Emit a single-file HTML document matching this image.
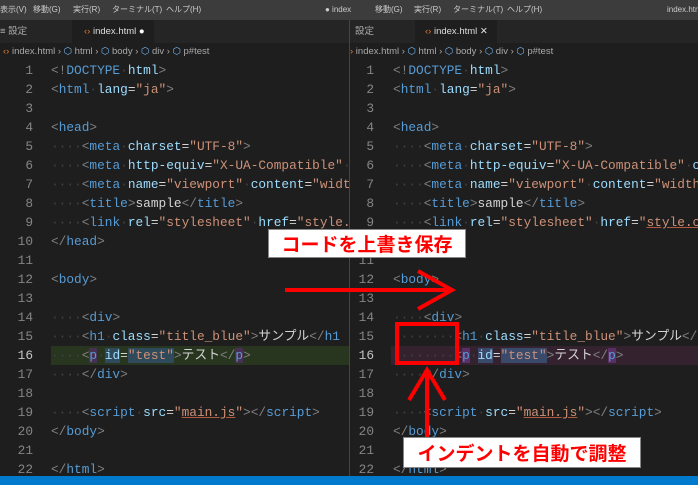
<!DOCTYPE html>
<html><head><meta charset="utf-8"><style>
*{margin:0;padding:0;box-sizing:border-box}
body{width:698px;height:485px;background:#1e1e1e;overflow:hidden;position:relative;font-family:"Liberation Sans","Noto Sans CJK JP",sans-serif}
.menu{position:absolute;left:0;top:0;width:698px;height:20px;background:#3c3c3c;color:#ccc;font-size:8px;line-height:20px;white-space:nowrap}
.menu span{position:absolute}
.tabs{position:absolute;top:20px;height:23px;background:#252526;font-size:9.5px;color:#aaa;line-height:23px}
.tab{position:absolute;top:0;height:23px;background:#1e1e1e;color:#ddd;padding-left:12px}
.crumb{position:absolute;top:43px;height:17px;font-size:9.5px;color:#a9a9a9;line-height:17px;white-space:nowrap}
.pane{position:absolute;top:61px;overflow:hidden;height:415px}
.ln{position:absolute;top:0;text-align:right;font-family:"Liberation Mono",monospace;font-size:12.8px;line-height:19px;color:#858585}
.code{position:absolute;top:0;font-family:"Liberation Mono","Noto Sans CJK JP",monospace;font-size:12.8px;line-height:19px;color:#d4d4d4;white-space:normal}
.code div{height:19px;white-space:pre}
.b{color:#808080}.t{color:#569cd6}.a{color:#9cdcfe}.s{color:#ce9178}.d{color:#424242}.u{text-decoration:underline;text-decoration-color:#b05a40}
.status{position:absolute;left:0;top:476px;width:698px;height:9px;background:#007acc}
.label{position:absolute;background:#fff;border:1px solid #888;color:#f00;font-weight:bold;font-size:19px;text-align:center;font-family:"Noto Sans CJK JP",sans-serif}
</style></head><body>
<div class="menu"><span style="left:0">表示(V)</span><span style="left:33px">移動(G)</span><span style="left:73px">実行(R)</span><span style="left:112px">ターミナル(T)</span><span style="left:166px">ヘルプ(H)</span>
<span style="left:325px">● index</span><span style="left:375px">移動(G)</span><span style="left:414px">実行(R)</span><span style="left:453px">ターミナル(T)</span><span style="left:507px">ヘルプ(H)</span><span style="left:667px">index.htm</span></div>
<div class="tabs" style="left:0;width:349px"><span style="position:absolute;left:0">≡ 設定</span><div class="tab" style="left:72px;width:82px"><span style="color:#e37933">‹›</span> index.html <span style="color:#fff">●</span></div></div>
<div class="tabs" style="left:350px;width:348px"><span style="position:absolute;left:5px">設定</span><div class="tab" style="left:65px;width:82px;padding-left:10px"><span style="color:#e37933">‹›</span> index.html ✕</div></div>
<div class="crumb" style="left:3px"><span style="color:#e37933">‹›</span> index.html › <span style="color:#75beff">⬡</span> html › <span style="color:#75beff">⬡</span> body › <span style="color:#75beff">⬡</span> div › <span style="color:#75beff">⬡</span> p#test</div>
<div class="crumb" style="left:350px"><span style="color:#e37933">›</span> index.html › <span style="color:#75beff">⬡</span> html › <span style="color:#75beff">⬡</span> body › <span style="color:#75beff">⬡</span> div › <span style="color:#75beff">⬡</span> p#test</div>

<div class="pane" style="left:0;width:349px">
<div style="position:absolute;left:51px;top:285px;width:298px;height:19px;background:#28351f"></div>
<div class="ln" style="left:0;width:33px">1<br>2<br>3<br>4<br>5<br>6<br>7<br>8<br>9<br>10<br>11<br>12<br>13<br>14<br>15<br><span style="color:#c6c6c6">16</span><br>17<br>18<br>19<br>20<br>21<br>22</div>
<div class="code" style="left:51px">
<div><span class="b">&lt;!</span><span class="t">DOCTYPE</span><span class="d">·</span><span class="a">html</span><span class="b">&gt;</span></div>
<div><span class="b">&lt;</span><span class="t">html</span><span class="d">·</span><span class="a">lang</span>=<span class="s">"ja"</span><span class="b">&gt;</span></div>
<div></div>
<div><span class="b">&lt;</span><span class="t">head</span><span class="b">&gt;</span></div>
<div><span class="d">····</span><span class="b">&lt;</span><span class="t">meta</span><span class="d">·</span><span class="a">charset</span>=<span class="s">"UTF-8"</span><span class="b">&gt;</span></div>
<div><span class="d">····</span><span class="b">&lt;</span><span class="t">meta</span><span class="d">·</span><span class="a">http-equiv</span>=<span class="s">"X-UA-Compatible"</span><span class="d">·</span><span class="a">content</span></div>
<div><span class="d">····</span><span class="b">&lt;</span><span class="t">meta</span><span class="d">·</span><span class="a">name</span>=<span class="s">"viewport"</span><span class="d">·</span><span class="a">content</span>=<span class="s">"width</span></div>
<div><span class="d">····</span><span class="b">&lt;</span><span class="t">title</span><span class="b">&gt;</span>sample<span class="b">&lt;/</span><span class="t">title</span><span class="b">&gt;</span></div>
<div><span class="d">····</span><span class="b">&lt;</span><span class="t">link</span><span class="d">·</span><span class="a">rel</span>=<span class="s">"stylesheet"</span><span class="d">·</span><span class="a">href</span>=<span class="s">"style.css"</span></div>
<div><span class="b">&lt;/</span><span class="t">head</span><span class="b">&gt;</span></div>
<div></div>
<div><span class="b">&lt;</span><span class="t">body</span><span class="b">&gt;</span></div>
<div></div>
<div><span class="d">····</span><span class="b">&lt;</span><span class="t">div</span><span class="b">&gt;</span></div>
<div><span class="d">····</span><span class="b">&lt;</span><span class="t">h1</span><span class="d">·</span><span class="a">class</span>=<span class="s">"title_blue"</span><span class="b">&gt;</span>サンプル<span class="b">&lt;/</span><span class="t">h1</span></div>
<div><span class="d">····</span><span class="b">&lt;</span><span class="t" style="background:#4a2f55">p</span><span class="d">·</span><span class="a" style="background:#2f4a5a">id</span>=<span class="s" style="background:#2f4a5a">"test"</span><span class="b">&gt;</span>テスト<span class="b">&lt;/</span><span class="t" style="background:#4a2f55">p</span><span class="b">&gt;</span></div>
<div><span class="d">····</span><span class="b">&lt;/</span><span class="t">div</span><span class="b">&gt;</span></div>
<div></div>
<div><span class="d">····</span><span class="b">&lt;</span><span class="t">script</span><span class="d">·</span><span class="a">src</span>=<span class="s">"<span class="u">main.js</span>"</span><span class="b">&gt;&lt;/</span><span class="t">script</span><span class="b">&gt;</span></div>
<div><span class="b">&lt;/</span><span class="t">body</span><span class="b">&gt;</span></div>
<div></div>
<div><span class="b">&lt;/</span><span class="t">html</span><span class="b">&gt;</span></div>
</div></div>

<div class="pane" style="left:350px;width:348px">
<div style="position:absolute;left:41px;top:285px;width:307px;height:19px;background:#34222f"></div>
<div class="ln" style="left:0;width:24px">1<br>2<br>3<br>4<br>5<br>6<br>7<br>8<br>9<br>10<br>11<br>12<br>13<br>14<br>15<br><span style="color:#c6c6c6">16</span><br>17<br>18<br>19<br>20<br>21<br>22</div>
<div class="code" style="left:43px">
<div><span class="b">&lt;!</span><span class="t">DOCTYPE</span><span class="d">·</span><span class="a">html</span><span class="b">&gt;</span></div>
<div><span class="b">&lt;</span><span class="t">html</span><span class="d">·</span><span class="a">lang</span>=<span class="s">"ja"</span><span class="b">&gt;</span></div>
<div></div>
<div><span class="b">&lt;</span><span class="t">head</span><span class="b">&gt;</span></div>
<div><span class="d">····</span><span class="b">&lt;</span><span class="t">meta</span><span class="d">·</span><span class="a">charset</span>=<span class="s">"UTF-8"</span><span class="b">&gt;</span></div>
<div><span class="d">····</span><span class="b">&lt;</span><span class="t">meta</span><span class="d">·</span><span class="a">http-equiv</span>=<span class="s">"X-UA-Compatible"</span><span class="d">·</span><span class="a">content</span></div>
<div><span class="d">····</span><span class="b">&lt;</span><span class="t">meta</span><span class="d">·</span><span class="a">name</span>=<span class="s">"viewport"</span><span class="d">·</span><span class="a">content</span>=<span class="s">"width</span></div>
<div><span class="d">····</span><span class="b">&lt;</span><span class="t">title</span><span class="b">&gt;</span>sample<span class="b">&lt;/</span><span class="t">title</span><span class="b">&gt;</span></div>
<div><span class="d">····</span><span class="b">&lt;</span><span class="t">link</span><span class="d">·</span><span class="a">rel</span>=<span class="s">"stylesheet"</span><span class="d">·</span><span class="a">href</span>=<span class="s">"<span class="u">style.css</span>"</span></div>
<div><span class="b">&lt;/</span><span class="t">head</span><span class="b">&gt;</span></div>
<div></div>
<div><span class="b">&lt;</span><span class="t">body</span><span class="b">&gt;</span></div>
<div></div>
<div><span class="d">····</span><span class="b">&lt;</span><span class="t">div</span><span class="b">&gt;</span></div>
<div><span class="d">········</span><span class="b">&lt;</span><span class="t">h1</span><span class="d">·</span><span class="a">class</span>=<span class="s">"title_blue"</span><span class="b">&gt;</span>サンプル<span class="b">&lt;/</span></div>
<div><span class="d">········</span><span class="b">&lt;</span><span class="t" style="background:#5a2f66">p</span><span class="d">·</span><span class="a" style="background:#3a4a6a">id</span>=<span class="s" style="background:#3a4a6a">"test"</span><span class="b">&gt;</span>テスト<span class="b">&lt;/</span><span class="t" style="background:#5a2f66">p</span><span class="b">&gt;</span></div>
<div><span class="d">····</span><span class="b">&lt;/</span><span class="t">div</span><span class="b">&gt;</span></div>
<div></div>
<div><span class="d">····</span><span class="b">&lt;</span><span class="t">script</span><span class="d">·</span><span class="a">src</span>=<span class="s">"<span class="u">main.js</span>"</span><span class="b">&gt;&lt;/</span><span class="t">script</span><span class="b">&gt;</span></div>
<div><span class="b">&lt;/</span><span class="t">body</span><span class="b">&gt;</span></div>
<div></div>
<div><span class="b">&lt;/</span><span class="t">html</span><span class="b">&gt;</span></div>
</div></div>
<div style="position:absolute;left:349px;top:20px;width:1px;height:456px;background:#444"></div>
<div class="status"></div>

<div class="label" style="left:268px;top:229px;width:198px;height:29px;line-height:27px">コードを上書き保存</div>
<div class="label" style="left:403px;top:437px;width:238px;height:31px;line-height:29px">インデントを自動で調整</div>
<svg style="position:absolute;left:0;top:0" width="698" height="485">
<g stroke="#f00" stroke-width="4" fill="none">
<line x1="285" y1="290" x2="452" y2="290"/>
<polyline points="418,271 452,290 418,309"/>
<rect x="397" y="324" width="60" height="39"/>
<line x1="427" y1="437" x2="427" y2="370"/>
<polyline points="409,400 427,370 445,400"/>
</g></svg>
</body></html>
